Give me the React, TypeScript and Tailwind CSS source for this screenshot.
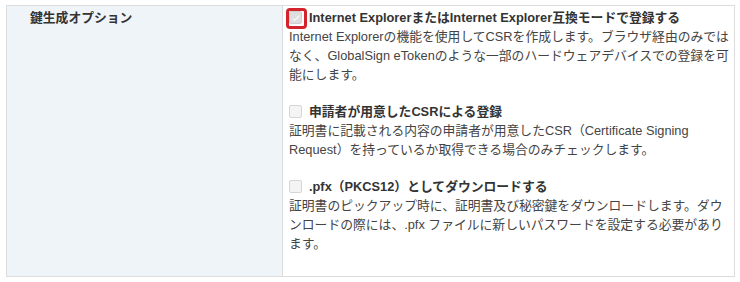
const OPTIONS = [
  {
    title: "Internet ExplorerまたはInternet Explorer互換モードで登録する",
    desc: "Internet Explorerの機能を使用してCSRを作成します。ブラウザ経由のみではなく、GlobalSign eTokenのような一部のハードウェアデバイスでの登録を可能にします。",
    checked: true,
    highlight: true,
  },
  {
    title: "申請者が用意したCSRによる登録",
    desc: "証明書に記載される内容の申請者が用意したCSR（Certificate Signing Request）を持っているか取得できる場合のみチェックします。",
    checked: false,
    highlight: false,
  },
  {
    title: ".pfx（PKCS12）としてダウンロードする",
    desc: "証明書のピックアップ時に、証明書及び秘密鍵をダウンロードします。ダウンロードの際には、.pfx ファイルに新しいパスワードを設定する必要があります。",
    checked: false,
    highlight: false,
  },
];

function Box({ checked, highlight }: { checked: boolean; highlight: boolean }) {
  return (
    <span
      className={`relative inline-flex h-[13px] w-[13px] shrink-0 items-center justify-center rounded-[2px] border ${
        checked ? "border-[#cfcfcf] bg-[#dedede]" : "border-[#d6d6d6] bg-[#f4f4f4]"
      }`}
    >
      {checked && (
        <svg viewBox="0 0 12 12" className="h-[10px] w-[10px]">
          <path d="M2 6.5l2.5 2.5L10 3" fill="none" stroke="#f4f4f4" strokeWidth="1.8" />
        </svg>
      )}
      {highlight && (
        <span className="absolute -left-[4px] -top-[4px] h-[21px] w-[21px] rounded-[4px] border-[3px] border-[#d3232c]" />
      )}
    </span>
  );
}

export default function App() {
  return (
    <div className="h-[282px] w-[740px] bg-white pl-[6px] pt-[5px] text-[12.8px] leading-[19px] text-[#333]" style={{ fontFamily: '"Liberation Sans", "Noto Sans CJK JP", sans-serif' }}>
      <div className="flex w-[729px] border border-[#dcdcdc]">
        <div className="w-[276px] shrink-0 border-r border-[#dcdcdc] bg-[#eff4f8] pl-[23px] pt-[2px] font-bold">
          鍵生成オプション
        </div>
        <div className="flex-1 pb-[23px] pl-[6px] pr-[4px] pt-[2px]">
          {OPTIONS.map((o, i) => (
            <div key={i} className={i > 0 ? "mt-[18px]" : ""}>
              <div className="flex items-center gap-[7px] font-bold">
                <Box checked={o.checked} highlight={o.highlight} />
                <span>{o.title}</span>
              </div>
              <p className="text-[#444]">{o.desc}</p>
            </div>
          ))}
        </div>
      </div>
    </div>
  );
}
